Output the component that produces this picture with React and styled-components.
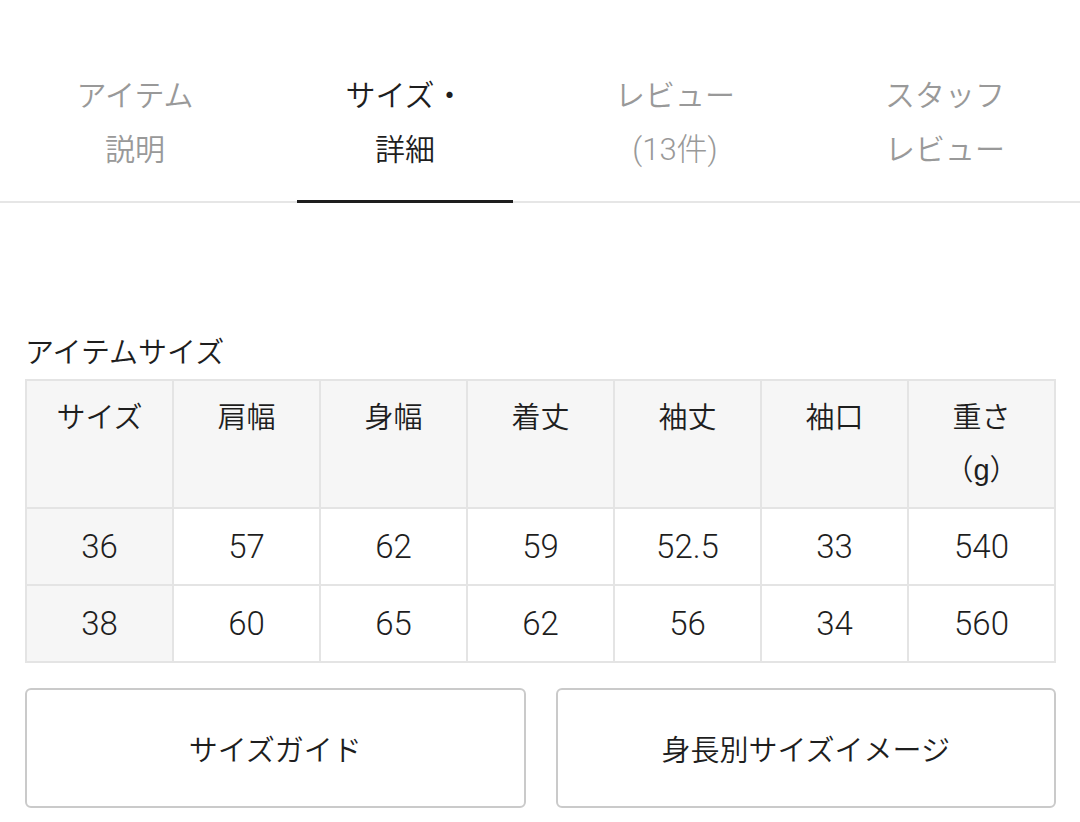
import styled, { createGlobalStyle } from 'styled-components';

const GlobalStyle = createGlobalStyle`
  html, body {
    margin: 0;
    padding: 0;
    background: #fff;
  }
  body {
    font-family: "Liberation Sans", "Noto Sans CJK JP", sans-serif;
    font-weight: 350;
    color: #1e1e1e;
  }
`;

const Page = styled.div`
  width: 1080px;
  height: 822px;
  overflow: hidden;
  background: #fff;
`;

/* ---- tabs ---- */
const TabBar = styled.nav`
  display: grid;
  grid-template-columns: repeat(4, 1fr);
  padding-top: 69px;
  border-bottom: 2px solid #e6e6e6;
`;

const Tab = styled.div`
  position: relative;
  text-align: center;
  font-size: 30px;
  line-height: 54px;
  padding-bottom: 24px;
  color: ${(p) => (p.active ? '#1e1e1e' : '#999')};

  &::after {
    content: '';
    display: ${(p) => (p.active ? 'block' : 'none')};
    position: absolute;
    left: 10%;
    right: 10%;
    bottom: -2px;
    height: 3px;
    background: #1e1e1e;
  }
`;

const Count = styled.span`
  font-family: "Roboto", "Noto Sans CJK JP", sans-serif;
  font-weight: 300;
  font-size: 31px;
`;

/* ---- size table ---- */
const Section = styled.section`
  padding: 130px 24px 0 25px;
`;

const Title = styled.h2`
  margin: 0 0 6px;
  font-size: 29px;
  font-weight: 350;
  line-height: 40px;
`;

const Table = styled.table`
  width: 100%;
  table-layout: fixed;
  border-collapse: collapse;
  border: 2px solid #e4e4e4;
`;

const Th = styled.th`
  border: 2px solid #e4e4e4;
  background: #f6f6f6;
  font-weight: 350;
  font-size: 29px;
  line-height: 52px;
  padding: 11px 4px;
  vertical-align: top;
  text-align: center;
`;

const Td = styled.td`
  border: 2px solid #e4e4e4;
  background: ${(p) => (p.head ? '#f6f6f6' : '#fff')};
  font-family: "Roboto", "Liberation Sans", sans-serif;
  font-weight: 300;
  font-size: 33px;
  line-height: 52px;
  padding: 12px 4px 11px;
  text-align: center;
`;

/* ---- buttons ---- */
const ButtonRow = styled.div`
  display: grid;
  grid-template-columns: 1fr 1fr;
  gap: 30px;
  margin-top: 25px;
`;

const GuideButton = styled.button`
  height: 120px;
  background: #fff;
  border: 2px solid #cacaca;
  border-radius: 6px;
  font-family: "Liberation Sans", "Noto Sans CJK JP", sans-serif;
  font-weight: 350;
  font-size: 29px;
  color: #1e1e1e;
  cursor: pointer;
`;

const tabs = [
  { key: 'item', first: 'アイテム', second: '説明' },
  { key: 'size', first: 'サイズ・', second: '詳細', active: true },
  { key: 'review', first: 'レビュー', second: <Count>(13件)</Count> },
  { key: 'staff', first: 'スタッフ', second: 'レビュー' },
];

const headers = ['サイズ', '肩幅', '身幅', '着丈', '袖丈', '袖口'];

const rows = [
  ['36', '57', '62', '59', '52.5', '33', '540'],
  ['38', '60', '65', '62', '56', '34', '560'],
];

export default function App() {
  return (
    <Page>
      <GlobalStyle />
      <TabBar>
        {tabs.map((t) => (
          <Tab key={t.key} active={t.active}>
            {t.first}
            <br />
            {t.second}
          </Tab>
        ))}
      </TabBar>

      <Section>
        <Title>アイテムサイズ</Title>
        <Table>
          <thead>
            <tr>
              {headers.map((h) => (
                <Th key={h}>{h}</Th>
              ))}
              <Th>
                重さ
                <br />
                （g）
              </Th>
            </tr>
          </thead>
          <tbody>
            {rows.map((r) => (
              <tr key={r[0]}>
                {r.map((v, i) => (
                  <Td key={i} head={i === 0}>
                    {v}
                  </Td>
                ))}
              </tr>
            ))}
          </tbody>
        </Table>

        <ButtonRow>
          <GuideButton>サイズガイド</GuideButton>
          <GuideButton>身長別サイズイメージ</GuideButton>
        </ButtonRow>
      </Section>
    </Page>
  );
}
